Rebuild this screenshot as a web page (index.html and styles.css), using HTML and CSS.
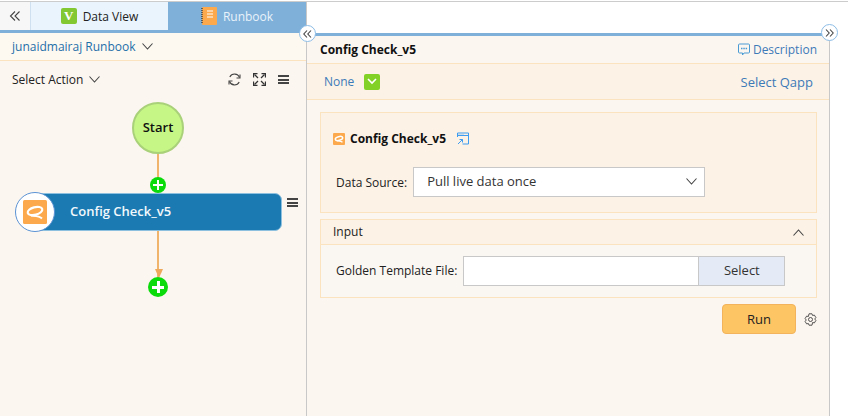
FILE: index.html
```html
<!DOCTYPE html>
<html lang="en">
<head>
    <meta charset="UTF-8">
    <title>Runbook</title>
    <link rel="stylesheet" href="styles.css">
</head>
<body>
    <div class="page">
        <div class="left">
            <div class="tabs">
                <div class="tab-collapse">
                    <svg width="12" height="12" viewBox="0 0 12 12"><path d="M6 1.500 1.500 6 6 10.500M10.500 1.500 6 6l4.500 4.500" class="line"/></svg>
                </div>
                <div class="tab tab-data">
                    <span class="v-icon">V</span>
                    <span>Data View</span>
                </div>
                <div class="tab tab-runbook">
                    <svg width="16" height="18" viewBox="0 0 16 18">
                        <rect x="1" y="0" width="15" height="18" rx="1" fill="#fba94c"/>
                        <path d="M1 1v16" stroke="#444" stroke-width="1.500" stroke-dasharray="1 1"/>
                        <path d="M6 4h6M6 7h6M6 10h6" stroke="#fff" stroke-width="1"/>
                    </svg>
                    <span>Runbook</span>
                </div>
            </div>
            <div class="runbook-name">
                <span>junaidmairaj Runbook</span>
                <svg width="11" height="7" viewBox="0 0 11 7"><path d="M.5.5l5 5.500 5-5.500" class="line"/></svg>
            </div>
            <div class="canvas">
                <div class="action-bar">
                    <span>Select Action</span>
                    <svg width="11" height="7" viewBox="0 0 11 7"><path d="M.5.5l5 5.500 5-5.500" class="line"/></svg>
                    <div class="tools">
                        <svg width="13" height="13" viewBox="0 0 13 13"><path d="M11.500 4.500A5.300 5.300 0 0 0 1.800 4M1.500 8.500A5.300 5.300 0 0 0 11.200 9" class="line"/><path d="M12 1.500v3.500H8.500M1 11.500V8h3.500" class="line"/></svg>
                        <svg width="13" height="13" viewBox="0 0 13 13"><path d="M.5 4.500V.5h4M8.500.5h4v4M12.500 8.500v4h-4M4.500 12.500h-4v-4" fill="none" stroke="#333" stroke-width="1.300"/><path d="M1.500 1.500l3.500 3.500M11.500 1.500 8 5M11.500 11.500 8 8M1.500 11.500 5 8" fill="none" stroke="#333" stroke-width="1.300"/></svg>
                        <span class="menu-icon"></span>
                    </div>
                </div>
                <div class="flow-line line-top"></div>
                <div class="flow-line line-bottom"></div>
                <div class="arrow-head"></div>
                <div class="start-node">Start</div>
                <div class="plus plus-small"></div>
                <div class="step-node">Config Check_v5</div>
                <div class="step-badge">
                    <svg width="24" height="24" viewBox="0 0 24 24">
                        <rect width="24" height="24" rx="1.500" fill="#fba94c"/>
                        <ellipse cx="12" cy="11" rx="7.500" ry="3.800" transform="rotate(-15 12 11)" fill="none" stroke="#fff" stroke-width="2.200"/>
                        <path d="M8 15.500c4 .5 8 .2 11 3" fill="none" stroke="#fff" stroke-width="2"/>
                    </svg>
                </div>
                <span class="menu-icon step-menu"></span>
                <div class="plus plus-big"></div>
            </div>
        </div>

        <div class="right">
            <div class="handle handle-left"><svg width="9" height="8" viewBox="0 0 9 8"><path d="M4 .5.800 4 4 7.500M8 .5 4.800 4 8 7.500" class="line"/></svg></div>
            <div class="handle handle-right"><svg width="9" height="8" viewBox="0 0 9 8"><path d="M1 .5 4.200 4 1 7.500M5 .5 8.200 4 5 7.500" class="line"/></svg></div>
            <div class="title-row">
                <span class="title">Config Check_v5</span>
                <span class="description">
                    <svg width="12" height="13" viewBox="0 0 12 13"><path d="M1.500 1h9a1 1 0 0 1 1 1v7a1 1 0 0 1-1 1H6l-1.500 2V10h-3a1 1 0 0 1-1-1V2a1 1 0 0 1 1-1z" fill="none" stroke="#4a9bd4"/><path d="M3 5.500h1.500M5.300 5.500h1.500M7.600 5.500h1.500" stroke="#4a9bd4" stroke-width="1.500"/></svg>
                    Description
                </span>
            </div>
            <div class="qapp-row">
                <span class="none">None</span>
                <span class="green-check"><svg width="10" height="7" viewBox="0 0 10 7"><path d="M1 1l4 4 4-4" fill="none" stroke="#fff" stroke-width="1.600"/></svg></span>
                <span class="select-qapp">Select Qapp</span>
            </div>
            <div class="content">
                <div class="box config-box">
                    <div class="config-head">
                        <svg width="12" height="12" viewBox="0 0 24 24">
                            <rect width="24" height="24" rx="2" fill="#fba94c"/>
                            <ellipse cx="12" cy="11" rx="7.500" ry="3.800" transform="rotate(-15 12 11)" fill="none" stroke="#fff" stroke-width="3"/>
                            <path d="M8 15.500c4 .5 8 .2 11 3" fill="none" stroke="#fff" stroke-width="2.500"/>
                        </svg>
                        <span class="title">Config Check_v5</span>
                        <svg class="open-icon" width="12" height="13" viewBox="0 0 12 13"><path d="M.5 5V1h11v11H5.500M.5 3.500h11" fill="none" stroke="#3d9cf0"/><path d="M2 3v-.5M4 3v-.5M6 3v-.5" stroke="#3d9cf0"/><path d="M1 12l4.500-4.500M2.500 7.500h3v3" fill="none" stroke="#3d9cf0"/></svg>
                    </div>
                    <div class="source-row">
                        <label>Data Source:</label>
                        <div class="source-select">
                            <span>Pull live data once</span>
                            <svg width="11" height="7" viewBox="0 0 11 7"><path d="M.5.5l5 5.500 5-5.500" class="line"/></svg>
                        </div>
                    </div>
                </div>
                <div class="box input-box">
                    <div class="input-head">
                        <span>Input</span>
                        <svg width="11" height="7" viewBox="0 0 11 7"><path d="M.5 6.500l5-5.500 5 5.500" class="line"/></svg>
                    </div>
                    <div class="input-body">
                        <label>Golden Template File:</label>
                        <div class="file-input"></div>
                        <div class="select-btn">Select</div>
                    </div>
                </div>
                <div class="run-row">
                    <div class="run-btn">Run</div>
                    <svg width="13" height="13" viewBox="0 0 13 13"><circle cx="6.500" cy="6.500" r="2" fill="none" stroke="#444" stroke-width=".9"/><path d="M5 .8h3l.6 1.700 1.800-.4 1.500 2.500-1.200 1.400 1.200 1.400-1.500 2.500-1.800-.4L8 12.200H5l-.6-1.700-1.800.4L1.100 8.400l1.200-1.400-1.200-1.400 1.500-2.500 1.800.4z" fill="none" stroke="#444" stroke-width=".9"/></svg>
                </div>
            </div>
        </div>
    </div>
</body>
</html>
```

FILE: styles.css
```css
html, body {
    margin: 0;
    padding: 0;
    background-color: #fff;
}
body {
    font-family: "Open Sans", sans-serif;
    font-size: 12px;
    color: #222;
    overflow: hidden;
}
.line {
    fill: none;
    stroke: #444;
    stroke-width: 1.100;
}
.page {
    display: flex;
    width: 848px;
    height: 415px;
    margin-top: 1px;
    box-sizing: border-box;
    border-top: 1px solid #ccc;
}

/* left column */
.left {
    width: 306px;
    display: flex;
    flex-direction: column;
    flex-shrink: 0;
    border-right: 1px solid #c8c8c8;
}
.tabs {
    display: flex;
    height: 31px;
    box-sizing: border-box;
    border-bottom: 3px solid #7eb0d9;
}
.tab-collapse {
    width: 30px;
    display: flex;
    align-items: center;
    justify-content: center;
    background-color: #f7f7f7;
    border-right: 1px solid #cfe0f0;
}
.tab {
    display: flex;
    align-items: center;
    justify-content: center;
    gap: 6px;
    width: 137px;
}
.tab-data {
    background-color: #eaf4fc;
    color: #222;
}
.tab-runbook {
    background-color: #7eb0d9;
    color: #e9f2fa;
    width: 138px;
}
.v-icon {
    width: 16px;
    height: 16px;
    border-radius: 2px;
    background-color: #82c832;
    color: #fff;
    font-family: "Liberation Serif", serif;
    font-weight: bold;
    font-size: 13px;
    line-height: 16px;
    text-align: center;
}
.runbook-name {
    height: 27px;
    display: flex;
    align-items: center;
    gap: 6px;
    padding-left: 12px;
    color: #1f6fa8;
    background-color: #fdf9f1;
    border-bottom: 1px solid #fbe3c0;
}
.canvas {
    position: relative;
    flex: 1;
    background-color: #fcf6f0;
}
.action-bar {
    display: flex;
    align-items: center;
    gap: 6px;
    height: 37px;
    padding: 0 17px 0 12px;
}
.tools {
    margin-left: auto;
    display: flex;
    align-items: center;
    gap: 12px;
}
.menu-icon {
    display: block;
    width: 11px;
    height: 9px;
    box-sizing: border-box;
    border-top: 2px solid #444;
    border-bottom: 2px solid #444;
    position: relative;
}
.menu-icon::after {
    content: "";
    position: absolute;
    left: 0;
    right: 0;
    top: 1.500px;
    height: 2px;
    background-color: #444;
}

/* flow diagram */
.flow-line {
    position: absolute;
    left: 157px;
    width: 2px;
    background-color: #f0b46c;
}
.line-top {
    top: 91px;
    height: 40px;
}
.line-bottom {
    top: 170px;
    height: 46px;
}
.arrow-head {
    position: absolute;
    left: 155px;
    top: 208px;
    border-left: 4px solid transparent;
    border-right: 4px solid transparent;
    border-top: 9px solid #eea95c;
}
.start-node {
    position: absolute;
    left: 132px;
    top: 41px;
    width: 52px;
    height: 52px;
    box-sizing: border-box;
    border: 2px solid #a9d17a;
    border-radius: 50%;
    background-color: #c6f685;
    font-size: 13px;
    font-weight: 600;
    text-align: center;
    line-height: 47px;
    color: #111;
}
.plus {
    position: absolute;
    border-radius: 50%;
    background-color: #0bdb0b;
    background-image: linear-gradient(#fff, #fff), linear-gradient(#fff, #fff);
    background-repeat: no-repeat;
    background-position: center;
}
.plus-small {
    left: 150px;
    top: 116px;
    width: 16px;
    height: 16px;
    background-size: 10px 2px, 2px 10px;
}
.plus-big {
    left: 148px;
    top: 216px;
    width: 20px;
    height: 20px;
    background-size: 12px 3px, 3px 12px;
}
.step-node {
    position: absolute;
    left: 32px;
    top: 132px;
    width: 250px;
    height: 38px;
    box-sizing: border-box;
    padding-left: 37px;
    background-color: #1b7ab2;
    border: 1px solid #8cc0de;
    border-radius: 0 7px 7px 0;
    color: #f2f8fc;
    font-size: 13px;
    font-weight: 600;
    line-height: 35px;
}
.step-badge {
    position: absolute;
    left: 15px;
    top: 131px;
    width: 40px;
    height: 40px;
    box-sizing: border-box;
    border: 1px solid #5b93d4;
    border-radius: 50%;
    background-color: #fff;
    display: flex;
    align-items: center;
    justify-content: center;
}
.step-menu {
    position: absolute;
    left: 287px;
    top: 137px;
}

/* right column */
.right {
    position: relative;
    width: 523px;
    flex-shrink: 0;
    margin-top: 31px;
    box-sizing: border-box;
    border-top: 3px solid #7eb0d9;
    border-right: 1px solid #c8c8c8;
    background-color: #fcf6f0;
}
.handle {
    position: absolute;
    width: 17px;
    height: 17px;
    box-sizing: border-box;
    border: 1px solid #8dbde6;
    border-radius: 50%;
    background-color: #fff;
    display: flex;
    align-items: center;
    justify-content: center;
}
.handle-left {
    left: -8px;
    top: -11px;
}
.handle-right {
    right: -9px;
    top: -12px;
}
.title-row {
    height: 27px;
    display: flex;
    align-items: center;
    justify-content: space-between;
    padding: 0 12px 0 13px;
    border-bottom: 1px solid #fbe3c0;
}
.title {
    font-weight: bold;
    color: #111;
}
.description {
    display: flex;
    align-items: center;
    gap: 3px;
    color: #3d7ab8;
}
.qapp-row {
    height: 35px;
    display: flex;
    align-items: center;
    padding: 0 16px 0 17px;
    background-color: #fcf2e6;
    border-bottom: 1px solid #fbe3c0;
    color: #3d7ab8;
}
.green-check {
    margin-left: 10px;
    width: 16px;
    height: 16px;
    border-radius: 2px;
    background-color: #82d126;
    display: flex;
    align-items: center;
    justify-content: center;
}
.select-qapp {
    font-size: 13px;
    margin-left: auto;
}
.content {
    padding: 12px 12px 0 13px;
}
.box {
    border: 1px solid #fbe3c0;
}
.config-box {
    height: 101px;
    box-sizing: border-box;
    background-color: #fcf2e6;
    padding: 17px 12px 0 12px;
    margin-bottom: 6px;
}
.config-head {
    display: flex;
    align-items: center;
    gap: 5px;
    height: 17px;
}
.open-icon {
    margin-left: 6px;
}
.source-row {
    display: flex;
    align-items: center;
    gap: 6px;
    margin-top: 20px;
    padding-left: 3px;
}
.source-select {
    width: 292px;
    height: 30px;
    box-sizing: border-box;
    border: 1px solid #c8c8c8;
    background-color: #fff;
    display: flex;
    align-items: center;
    justify-content: space-between;
    padding: 0 7px 2px 13px;
    font-size: 13px;
    color: #333;
}
.input-box {
    background-color: #faf7f3;
}
.input-head {
    height: 24px;
    box-sizing: content-box;
    display: flex;
    align-items: center;
    justify-content: space-between;
    padding: 0 12px;
    background-color: #fcf2e6;
    border-bottom: 1px solid #fbe3c0;
}
.input-head span {
    margin-top: -1px;
}
.input-body {
    display: flex;
    align-items: center;
    height: 52px;
    padding: 0 15px;
}
.input-body label {
    margin: -2px 6px 0 0;
}
.file-input {
    width: 236px;
    height: 30px;
    box-sizing: border-box;
    border: 1px solid #c8c8c8;
    background-color: #fff;
}
.select-btn {
    width: 86px;
    height: 30px;
    box-sizing: border-box;
    border: 1px solid #c8c8c8;
    border-left: none;
    background-color: #e4ebf7;
    text-align: center;
    line-height: 26px;
    font-size: 13px;
    color: #333;
}
.run-row {
    display: flex;
    align-items: center;
    justify-content: flex-end;
    gap: 8px;
    margin-top: 6px;
}
.run-btn {
    width: 74px;
    height: 30px;
    box-sizing: border-box;
    border: 1px solid #f2b35c;
    border-radius: 4px;
    background-color: #fec564;
    text-align: center;
    line-height: 28px;
    font-size: 13px;
}
```
